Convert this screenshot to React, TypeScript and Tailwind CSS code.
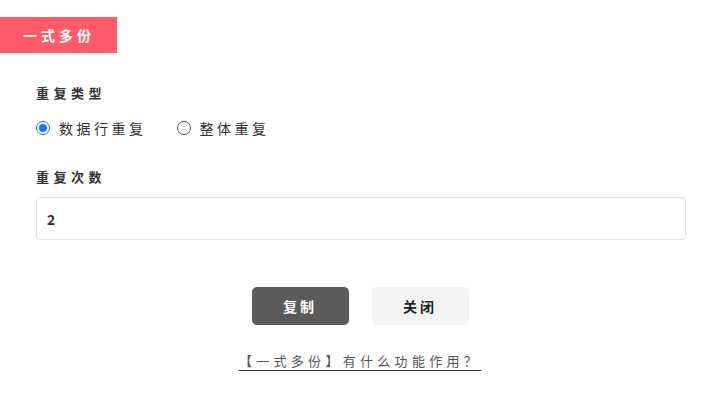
import { useState } from 'react'

const font = { fontFamily: '"Noto Sans CJK SC", "Noto Sans", sans-serif' }

function Radio({ checked, label, onClick }: { checked: boolean; label: string; onClick: () => void }) {
    return (
        <button onClick={onClick} className="flex items-center gap-[9px] h-[20px]">
            <span
                className={
                    checked
                        ? 'w-[14px] h-[14px] rounded-full border-[1.5px] border-[#1677ff] flex items-center justify-center'
                        : 'w-[14px] h-[14px] rounded-full border-[1.5px] border-[#555] flex items-center justify-center'
                }
            >
                {checked && <span className="w-[8px] h-[8px] rounded-full bg-[#1677ff]" />}
            </span>
            <span className="text-[14px] leading-[20px] tracking-[3.5px] text-[#333]">{label}</span>
        </button>
    )
}

export default function App() {
    const [mode, setMode] = useState<'row' | 'all'>('row')
    const [count, setCount] = useState('2')

    return (
        <div className="w-[720px] h-[405px] bg-white overflow-hidden" style={font}>
            <div className="mt-[17px] w-[117px] h-[36px] bg-[#ff5a6a] flex items-center pl-[23px]">
                <span className="text-white text-[14px] font-bold tracking-[4px]">一式多份</span>
            </div>

            <div className="px-[36px]">
                <div className="mt-[30px] text-[13px] leading-[20px] font-bold tracking-[4.5px] text-[#333]">重复类型</div>

                <div className="mt-[15px] flex items-center gap-[30px]">
                    <Radio checked={mode === 'row'} label="数据行重复" onClick={() => setMode('row')} />
                    <Radio checked={mode === 'all'} label="整体重复" onClick={() => setMode('all')} />
                </div>

                <div className="mt-[29px] text-[13px] leading-[20px] font-bold tracking-[4.5px] text-[#333]">重复次数</div>

                <input
                    value={count}
                    onChange={(e) => setCount(e.target.value)}
                    className="mt-[10px] w-[650px] h-[43px] border border-[#e2e2e2] rounded-[4px] px-[10px] text-[14px] font-bold text-[#333] outline-none"
                    style={font}
                />

                <div className="mt-[47px] flex justify-center gap-[23px]">
                    <button className="w-[97px] h-[38px] rounded-[5px] bg-[#5b5b5b] text-white text-[14px] font-bold tracking-[3px]">
                        复制
                    </button>
                    <button className="w-[97px] h-[38px] rounded-[5px] bg-[#f2f3f2] text-[#222] text-[14px] font-bold tracking-[3px]">
                        关闭
                    </button>
                </div>

                <div className="mt-[26px] flex justify-center">
                    <a className="text-[13px] leading-[20px] tracking-[4.3px] text-[#555] underline underline-offset-[4px] decoration-[#333] cursor-pointer">
                        【一式多份】有什么功能作用？
                    </a>
                </div>
            </div>
        </div>
    )
}
